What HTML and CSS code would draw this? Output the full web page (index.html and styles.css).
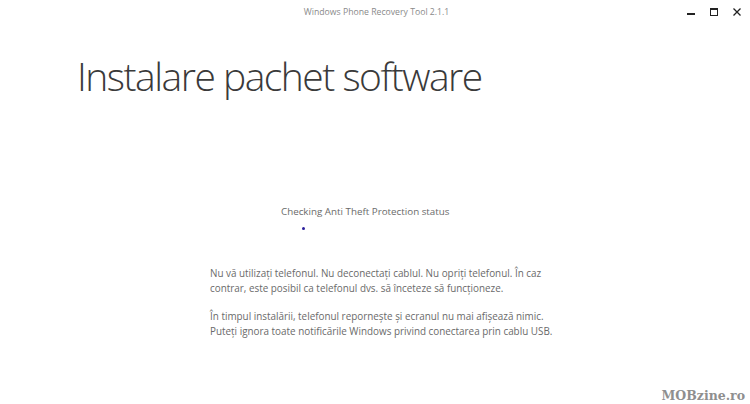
FILE: index.html
```html
<!DOCTYPE html>
<html lang="ro">
<head>
<meta charset="utf-8">
<title>Windows Phone Recovery Tool</title>
<link rel="stylesheet" href="styles.css">
</head>
<body>
<div class="window">
  <header class="titlebar">
    <div class="title">Windows Phone Recovery Tool 2.1.1</div>
    <div class="controls">
      <span class="ctl"><svg width="10" height="10" viewBox="0 0 10 10"><rect x="1" y="6" width="8" height="2" fill="#222"/></svg></span>
      <span class="ctl"><svg width="10" height="10" viewBox="0 0 10 10"><rect x="1.5" y="1.5" width="7" height="7" fill="none" stroke="#222" stroke-width="1"/><rect x="1" y="1" width="8" height="2" fill="#222"/></svg></span>
      <span class="ctl"><svg width="10" height="10" viewBox="0 0 10 10"><path d="M1.5 1.5 L8.5 8.5 M8.5 1.5 L1.5 8.5" stroke="#222" stroke-width="1.3"/></svg></span>
    </div>
  </header>
  <h1 class="heading">Instalare pachet software</h1>
  <section class="status">
    <div class="status-text">Checking Anti Theft Protection status</div>
    <div class="spinner"><span class="dot"></span></div>
  </section>
  <section class="info">
    <p>Nu vă utilizaţi telefonul. Nu deconectaţi cablul. Nu opriţi telefonul. În caz<br>contrar, este posibil ca telefonul dvs. să înceteze să funcţioneze.</p>
    <p>În timpul instalării, telefonul repornește și ecranul nu mai afișează nimic.<br>Puteți ignora toate notificările Windows privind conectarea prin cablu USB.</p>
  </section>
  <div class="watermark">MOBzine.ro</div>
</div>
</body>
</html>
```
FILE: styles.css
```css
html, body {
  margin: 0;
  padding: 0;
  background: #fff;
}
.window {
  position: relative;
  width: 750px;
  height: 404px;
  overflow: hidden;
  font-family: "Open Sans", "Noto Sans", sans-serif;
}
.titlebar {
  position: relative;
  height: 24px;
  display: flex;
  justify-content: center;
  align-items: center;
}
.title {
  font-size: 8.7px;
  color: #8a8a8a;
  padding-left: 3px;
}
.controls {
  position: absolute;
  right: 8px;
  top: 7px;
  display: flex;
  gap: 13px;
}
.ctl {
  display: flex;
  width: 10px;
  height: 10px;
}
.heading {
  margin: 27px 0 0 77px;
  font-weight: 300;
  font-size: 39px;
  line-height: 50px;
  color: #3a3a3a;
  letter-spacing: -1.5px;
}
.status {
  margin: 103px 0 0 281px;
}
.status-text {
  font-size: 9.8px;
  color: #6a6a6a;
  line-height: 16px;
}
.spinner {
  height: 15px;
  padding-left: 21px;
  padding-top: 7px;
  box-sizing: border-box;
}
.dot {
  display: block;
  width: 3px;
  height: 3px;
  border-radius: 50%;
  background: #2b1f9c;
}
.info {
  margin: 31px 0 0 210px;
  font-size: 9.9px;
  line-height: 15px;
  color: #6a6a6a;
}
.info p {
  margin: 0 0 13px 0;
}
.watermark {
  position: absolute;
  right: 5px;
  bottom: 1px;
  font-family: "DejaVu Serif", serif;
  font-weight: bold;
  font-size: 12.5px;
  color: #8f8f8f;
}
```
